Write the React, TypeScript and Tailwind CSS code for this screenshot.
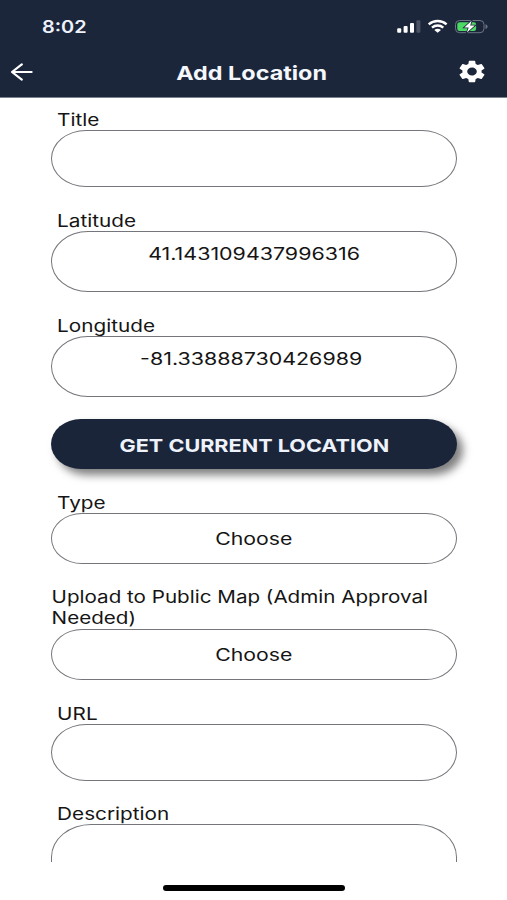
import type { ReactNode } from "react";
import { clsx } from "clsx";
import { MdSettings } from "react-icons/md";

type FieldProps = {
  label: string;
  children: ReactNode;
  wide?: boolean;
  className?: string;
};

function Field({ label, children, wide, className }: FieldProps) {
  return (
    <div className={clsx("flex flex-col", className)}>
      <label
        className={clsx(
          "w-[330px] origin-left",
          wide ? "scale-x-[1.212] pl-[0.5px]" : "translate-y-[0.6px] scale-x-[1.22] pl-[5px]",
        )}
      >
        {label}
      </label>
      {children}
    </div>
  );
}

function Select({ value }: { value: string }) {
  return (
    <button className="flex h-[51px] items-center justify-center rounded-[31px/25.5px] border border-[#74767b]">
      <span className="translate-y-[0.6px] scale-x-[1.25]">{value}</span>
    </button>
  );
}

function Coordinate({ value, className }: { value: string; className?: string }) {
  return (
    <div
      className={clsx(
        "flex h-[61px] justify-center rounded-[37px/30.5px] border border-[#74767b] pt-[12px]",
        className,
      )}
    >
      <span className="scale-x-[1.26]">{value}</span>
    </div>
  );
}

function StatusIcons() {
  return (
    <svg width="92" height="15" viewBox="397 19 92 15" fill="#fff">
      <rect x="397.2" y="28.2" width="4" height="4.6" rx="1" />
      <rect x="403.6" y="26" width="4" height="6.8" rx="1" />
      <rect x="410" y="23" width="4" height="9.8" rx="1" />
      <rect x="416.4" y="20.2" width="4" height="12.6" rx="1" opacity="0.2" />
      <g fill="none" stroke="#fff" strokeWidth="2.4">
        <path d="M428.7 24.4C433.8 19.9 441.5 19.9 446.6 24.4" />
        <path d="M432 27.6C435.3 24.7 440 24.7 443.3 27.6" />
      </g>
      <path d="M434.3 29.9C436.3 28.3 439 28.3 441 29.9L437.65 32.7Z" />
      <rect x="455.5" y="20.5" width="28.5" height="12.2" rx="4" fill="none" stroke="#6d7583" />
      <path d="M485.5 24.3C488.3 25.2 488.3 28.2 485.5 29Z" fill="#6d7583" />
      <rect x="457.3" y="22.2" width="18.8" height="8.8" rx="2.3" fill="#4cd964" />
      <path
        d="M471.6 20.8L464.3 27.5H468.7L466.9 32.4L474.8 25.6H470.2Z"
        stroke="#1c263b"
        strokeWidth="1.6"
        paintOrder="stroke"
      />
    </svg>
  );
}

function Header() {
  return (
    <header className="h-[98px] shrink-0 border-b border-[#7c8290] bg-[#1c263b] text-white">
      <div className="flex h-[53px] items-center justify-between pr-[18px] pl-[42px]">
        <span className="origin-left translate-y-[0.6px] scale-x-[1.17] text-[17px] font-semibold text-[#eef2fb]">
          8:02
        </span>
        <StatusIcons />
      </div>
      <div className="grid h-[37px] grid-cols-[1fr_auto_1fr] items-center pr-[19px] pl-[10px]">
        <button aria-label="Back">
          <svg width="23" height="18" viewBox="0 0 23 18" fill="none" stroke="#fff" strokeWidth="2.2">
            <path d="M11.8 1.4L2 9L11.8 16.6M2 9H21.6" strokeLinejoin="round" strokeLinecap="round" />
          </svg>
        </button>
        <h1 className="translate-x-[2.3px] translate-y-[1.6px] scale-x-[1.23] text-[19px] font-bold text-[#f4f7fc]">
          Add Location
        </h1>
        <button aria-label="Settings" className="justify-self-end">
          <MdSettings preserveAspectRatio="none" className="h-[27px] w-[32px]" />
        </button>
      </div>
    </header>
  );
}

export default function App() {
  return (
    <div className="flex h-[900px] w-[507px] flex-col overflow-hidden bg-white font-[Inter,sans-serif] text-[17px] leading-[21px] text-[#151515]">
      <Header />
      <main className="flex h-[764px] flex-col overflow-hidden pt-[11px] pr-[50px] pl-[51px]">
        <Field label="Title">
          <input className="h-[57px] rounded-[35px/28.5px] border border-[#74767b] px-8 outline-none" />
        </Field>
        <Field label="Latitude" className="mt-[23px]">
          <Coordinate value="41.143109437996316" />
        </Field>
        <Field label="Longitude" className="mt-[23px]">
          <Coordinate value="-81.33888730426989" className="pr-[6px]" />
        </Field>
        <button className="mt-[22px] flex h-[50px] shrink-0 items-center justify-center rounded-[30px/25px] bg-[#1a253a] text-[18px] font-bold text-[#eef2fb] shadow-[6px_6px_8px_rgba(0,0,0,0.5)]">
          <span className="translate-y-[0.6px] scale-x-[1.2]">GET CURRENT LOCATION</span>
        </button>
        <Field label="Type" className="mt-[23px]">
          <Select value="Choose" />
        </Field>
        <Field label="Upload to Public Map (Admin Approval Needed)" wide className="mt-[23px]">
          <Select value="Choose" />
        </Field>
        <Field label="URL" className="mt-[23px]">
          <input className="h-[57px] rounded-[35px/28.5px] border border-[#74767b] px-8 outline-none" />
        </Field>
        <Field label="Description" className="mt-[22px]">
          <textarea className="h-[110px] resize-none rounded-[40px/33px] border border-[#74767b] px-8 outline-none" />
        </Field>
      </main>
      <div className="mt-[23px] ml-[163px] h-[6px] w-[182px] shrink-0 rounded-full bg-black" />
    </div>
  );
}
